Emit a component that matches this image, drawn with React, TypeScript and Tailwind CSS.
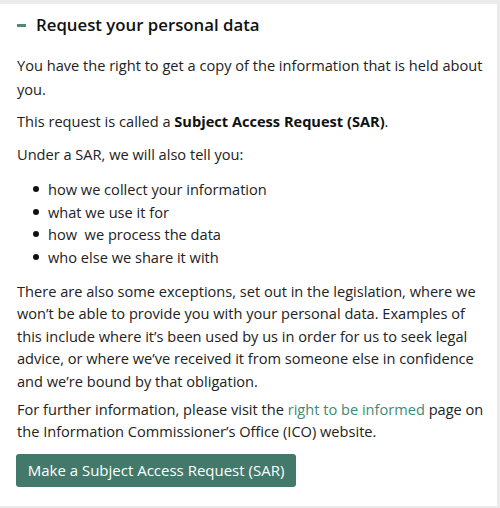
export default function App() {
  const items = [
    "how we collect your information",
    "what we use it for",
    "how\u00a0 we process the data",
    "who else we share it with",
  ];

  return (
    <div className="w-[500px] h-[508px] bg-[#ebebeb] pt-[4px] pr-[3px] pb-[2px] font-['Open_Sans',sans-serif] text-[#222]">
      <div className="h-full bg-white pl-[17px] pr-[12px] pt-[8px]">
        <h2 className="flex items-center gap-[10px] text-[16.8px] font-semibold leading-[26px] text-[#111]">
          <span className="block w-[9px] h-[3px] bg-[#4a8a78]" />
          Request your personal data
        </h2>

        <div className="mt-[16px] text-[14.6px] leading-[23.5px]">
          <p>You have the right to get a copy of the information that is held about you.</p>
          <p className="mt-[9px]">
            This request is called a <strong className="font-bold text-[#111]">Subject Access Request (SAR)</strong>.
          </p>
          <p className="mt-[9px]">Under a SAR, we will also tell you:</p>
          <ul className="mt-[12px] pl-[16px]">
            {items.map((item) => (
              <li key={item} className="flex items-center gap-[9px] leading-[22.5px]">
                <span className="block w-[6px] h-[6px] rounded-full bg-[#111]" />
                {item}
              </li>
            ))}
          </ul>
          <p className="mt-[12px] leading-[22.4px]">
            There are also some exceptions, set out in the legislation, where we won’t be able to provide you with your
            personal data. Examples of this include where it’s been used by us in order for us to seek legal advice, or
            where we’ve received it from someone else in confidence and we’re bound by that obligation.
          </p>
          <p className="mt-[6px] leading-[22.4px]">
            For further information, please visit the{" "}
            <a href="#" className="text-[#3f8a72]">
              right to be informed
            </a>{" "}
            page on the Information Commissioner’s Office (ICO) website.
          </p>
          <button className="mt-[11px] h-[33px] w-[280px] -ml-[1px] rounded-[3px] bg-[#42796a] text-white text-[15px]">
            Make a Subject Access Request (SAR)
          </button>
        </div>
      </div>
    </div>
  );
}
